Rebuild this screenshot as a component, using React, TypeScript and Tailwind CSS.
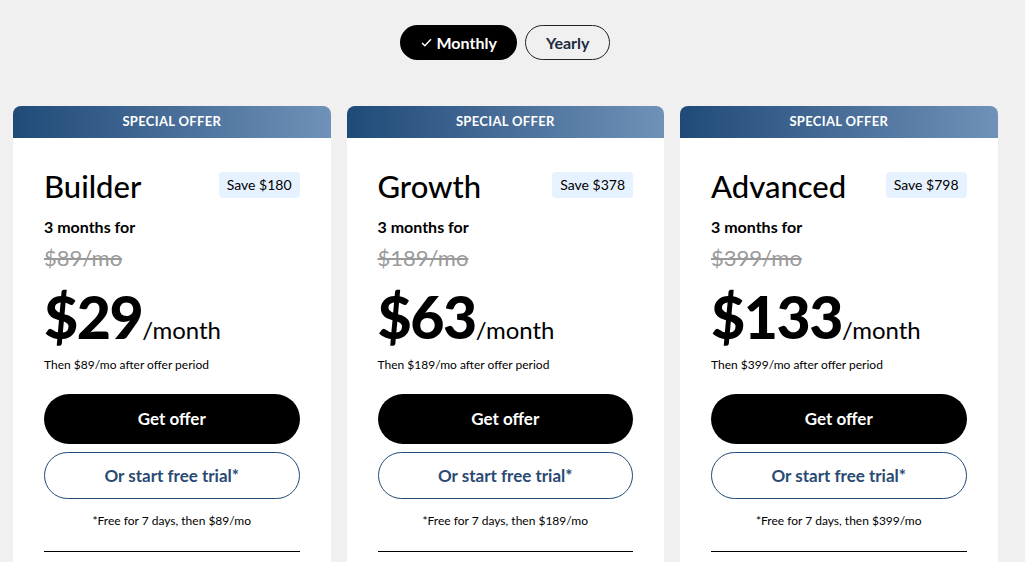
import React, { useState } from "react";

const plans = [
  { name: "Builder", save: "$180", was: "$89/mo", price: "$29", after: "$89/mo" },
  { name: "Growth", save: "$378", was: "$189/mo", price: "$63", after: "$189/mo" },
  { name: "Advanced", save: "$798", was: "$399/mo", price: "$133", after: "$399/mo" },
];

export default function App() {
  const [period, setPeriod] = useState<"monthly" | "yearly">("monthly");

  return (
    <div
      className="min-h-[562px] w-full overflow-hidden bg-[#f0f0f0] text-black"
      style={{ fontFamily: "Lato, 'Noto Sans', Arial, sans-serif" }}
    >
      <div className="w-[1010px]">
        {/* Billing toggle */}
        <div className="flex justify-center gap-2 pt-[25px]">
          <button
            onClick={() => setPeriod("monthly")}
            className={`flex h-[35px] items-center gap-1 rounded-full px-5 text-[16px] font-bold ${
              period === "monthly" ? "bg-black text-white" : "border border-[#222] text-[#1c2b3d]"
            }`}
          >
            {period === "monthly" && (
              <svg width="13" height="13" viewBox="0 0 16 16" fill="none" stroke="currentColor" strokeWidth="1.8">
                <path d="M2.5 8.5l3.5 3.5 7.5-8" />
              </svg>
            )}
            Monthly
          </button>
          <button
            onClick={() => setPeriod("yearly")}
            className={`flex h-[35px] items-center gap-1 rounded-full px-[20px] text-[16px] font-bold ${
              period === "yearly" ? "bg-black text-white" : "border border-[#222] text-[#1c2b3d]"
            }`}
          >
            Yearly
          </button>
        </div>

        {/* Plan cards */}
        <div className="mt-[46px] flex gap-4 pl-[13px]">
          {plans.map((p) => (
            <div key={p.name} className="w-[317.5px] shrink-0">
              <div className="flex h-[32px] items-center justify-center rounded-t-lg bg-gradient-to-r from-[#1f4a78] to-[#7092b8] text-[13px] font-bold tracking-wide text-white">
                SPECIAL OFFER
              </div>
              <div className="bg-white px-[31px] pt-[29px] pb-[11px]">
                <div className="flex items-start justify-between">
                  <h2 className="text-[31px] leading-[38px] font-medium">{p.name}</h2>
                  <span className="mt-[5px] rounded bg-[#e6f2ff] px-2 py-[4px] text-[14px] leading-[18px]">
                    Save {p.save}
                  </span>
                </div>
                <div className="mt-[12px] text-[16px] font-bold leading-5">3 months for</div>
                <div className="mt-[7px] text-[22px] leading-7 text-[#9a9a9a] line-through">{p.was}</div>
                <div className="mt-[13px] flex items-baseline">
                  <span className="text-[59px] leading-[64px] font-black tracking-tight">{p.price}</span>
                  <span className="text-[24px]">/month</span>
                </div>
                <div className="mt-[8px] text-[12px] leading-4">Then {p.after} after offer period</div>
                <button className="mt-[21px] h-[50px] w-full rounded-full bg-black text-[17px] font-bold text-white">
                  Get offer
                </button>
                <button className="mt-[8px] h-[47px] w-full rounded-full border border-[#1f4a78] text-[17px] font-bold text-[#2a4a73]">
                  Or start free trial*
                </button>
                <div className="mt-[14px] text-center text-[12px] leading-4">*Free for 7 days, then {p.after}</div>
                <div className="mt-[22px] border-t border-black" />
              </div>
            </div>
          ))}
        </div>
      </div>
    </div>
  );
}
